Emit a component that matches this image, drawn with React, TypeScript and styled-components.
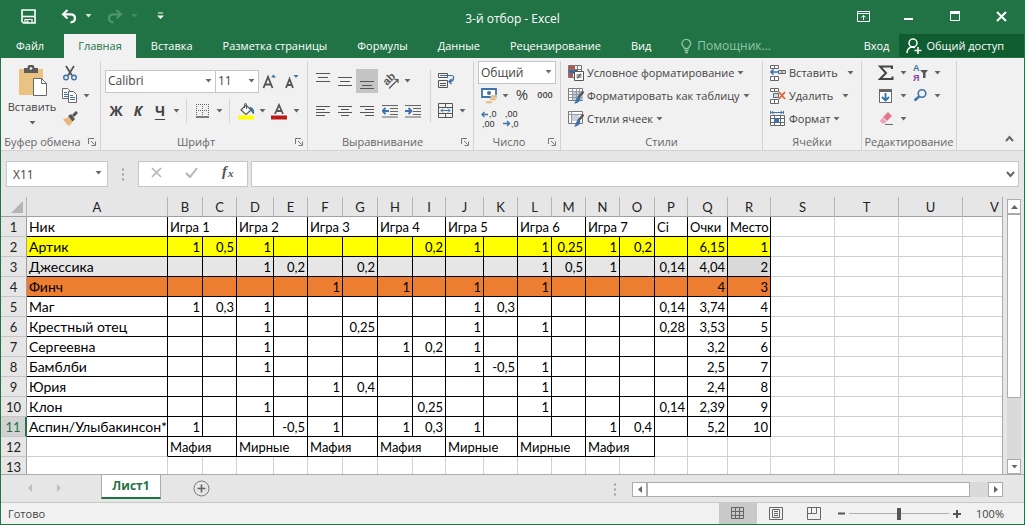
import React from 'react';
import styled, { createGlobalStyle, css } from 'styled-components';

const green = '#217346';
const uiFont = '"Open Sans", "Noto Sans", sans-serif';
const cellFont = 'Lato, "Open Sans", sans-serif';

const GlobalStyle = createGlobalStyle`
  *, *::before, *::after { box-sizing: border-box; }
  body { margin: 0; background: #e6e6e6; }
  button, input, select { font: inherit; color: inherit; margin: 0; }
  button { border: 0; padding: 0; background: none; cursor: default; }
`;

const Window = styled.div`
  display: flex;
  flex-direction: column;
  height: 100vh;
  min-height: 320px;
  overflow: hidden;
  border: 1px solid ${green};
  border-top: 0;
  background: #e6e6e6;
  color: #444;
  font: 11px/16px ${uiFont};
`;

/* ---------- title bar ---------- */

const TitleBar = styled.header`
  display: grid;
  grid-template-columns: 1fr auto 1fr;
  flex: none;
  height: 34px;
  background: ${green};
  color: #fff;
`;

const QuickAccess = styled.div`
  display: flex;
  align-items: center;
  gap: 8px;
  height: 32px;
  padding-left: 7px;
`;

const QuickPair = styled.div`
  display: flex;
`;

const BarButton = styled.button<{ $w: number; $dim?: boolean }>`
  display: flex;
  align-items: center;
  justify-content: center;
  flex: none;
  width: ${p => p.$w}px;
  height: 24px;
  color: ${p => (p.$dim ? '#4f9470' : '#fff')};
`;

const DocTitle = styled.h1`
  margin: 0;
  padding-top: 3px;
  font-size: 12px;
  font-weight: 400;
  line-height: 32px;
`;

const WindowButtons = styled.div`
  display: flex;
  align-items: center;
  justify-content: flex-end;
  height: 32px;
`;

/* ---------- tabs ---------- */

const TabBar = styled.nav`
  display: flex;
  flex: none;
  height: 24px;
  background: ${green};
  color: #fff;
`;

const Tab = styled.button<{ $active?: boolean; $file?: boolean }>`
  flex: none;
  height: 24px;
  padding: ${p => (p.$file ? '0 20px 0 15px' : p.$active ? '0 14px' : '0 15px')};
  white-space: nowrap;
  ${p => p.$active && css`background: #f1f1f1; color: ${green};`}
`;

const Assistant = styled.label`
  display: flex;
  align-items: center;
  gap: 5px;
  flex: 1;
  min-width: 0;
  padding-left: 15px;
  color: #92c3a8;
`;

const AssistantInput = styled.input`
  width: 100px;
  border: 0;
  padding: 0;
  background: none;
  outline: 0;
  font-size: 12px;
  &::placeholder { color: #92c3a8; opacity: 1; }
`;

const SignIn = styled.button`
  padding: 0 10px;
`;

const Share = styled.button`
  display: flex;
  align-items: center;
  gap: 4px;
  height: 23px;
  padding: 0 20px 0 7px;
  background: #0f5c30;
  white-space: nowrap;
`;

/* ---------- ribbon ---------- */

const Ribbon = styled.section`
  display: flex;
  flex: none;
  height: 93px;
  border-bottom: 1px solid #d2d2d2;
  background: #f1f1f1;
`;

const Group = styled.div<{ $w: number }>`
  display: flex;
  flex-direction: column;
  flex: none;
  width: ${p => p.$w}px;
  height: 89px;
  margin-top: 3px;
  border-right: 1px solid #d2d2d2;
`;

const GroupBody = styled.div<{ $pad?: number; $padEnd?: number }>`
  display: flex;
  flex: 1;
  padding: 0 ${p => p.$padEnd ?? 0}px 0 ${p => p.$pad ?? 4}px;
`;

const GroupFooter = styled.div`
  display: flex;
  align-items: center;
  height: 16px;
  color: #666;
`;

const GroupLabel = styled.span`
  flex: 1;
  text-align: center;
  white-space: nowrap;
`;

const Launcher = styled.button`
  display: flex;
  justify-content: center;
  width: 16px;
`;

const Rows = styled.div<{ $two?: boolean; $grow?: boolean }>`
  display: flex;
  flex-direction: column;
  ${p => p.$grow && 'flex: 1;'}
  ${p => p.$two && 'gap: 6px; padding-top: 8px;'}
`;

const Row = styled.div<{ $tall?: boolean }>`
  display: flex;
  align-items: center;
  height: ${p => (p.$tall ? 24 : 23)}px;
`;

const Tool = styled.button<{ $w?: number; $on?: boolean }>`
  display: flex;
  align-items: center;
  justify-content: center;
  flex: none;
  width: ${p => p.$w ?? 22}px;
  height: 24px;
  ${p => p.$on && 'background: #c5c5c5;'}
`;

const LetterTool = styled(Tool)<{ $style: 'bold' | 'italic' | 'underline' }>`
  font-size: 14px;
  font-weight: 700;
  ${p => p.$style === 'italic' && 'font-style: italic;'}
  ${p => p.$style === 'underline' && 'text-decoration: underline; text-underline-offset: 3px;'}
`;

const PercentTool = styled(Tool)`
  padding-bottom: 4px;
  font-size: 15px;
`;

const ThousandsTool = styled(Tool)`
  padding-bottom: 2px;
  font-size: 9px;
  font-weight: 600;
`;

const Divider = styled.span<{ $tall?: boolean }>`
  flex: none;
  width: 1px;
  height: ${p => (p.$tall ? 54 : 24)}px;
  margin: ${p => (p.$tall ? '8px 4px 0 0' : '0 5px')};
  background: #d5d5d5;
`;

const PasteButton = styled.button`
  display: flex;
  flex-direction: column;
  align-items: center;
  width: 54px;
  padding-top: 4px;
  gap: 2px;
`;

const PasteArrow = styled.span`
  display: flex;
  padding-top: 4px;
`;

const LabelTool = styled.button<{ $split?: boolean }>`
  display: flex;
  align-items: center;
  height: 23px;
  gap: 3px;
  white-space: nowrap;
  & > svg:last-child { margin-left: ${p => (p.$split ? 6 : 0)}px; }
`;

const ComboBox = styled.div<{ $w: number; $joined?: boolean }>`
  position: relative;
  flex: none;
  width: ${p => p.$w}px;
  height: 23px;
  ${p => p.$joined && 'margin-left: -1px;'}
  & > svg { position: absolute; right: 4px; top: 9px; pointer-events: none; }
`;

const ComboSelect = styled.select`
  appearance: none;
  width: 100%;
  height: 100%;
  border: 1px solid #c6c6c6;
  border-radius: 0;
  padding: 0 0 0 2px;
  background: #fff;
  outline: 0;
  font-size: 12px;
`;

const RibbonEnd = styled.div`
  display: flex;
  flex: 1;
  align-items: flex-end;
  justify-content: flex-end;
  padding: 0 10px 0 0;
  height: 88px;
`;

/* ---------- formula bar ---------- */

const FormulaBar = styled.section`
  display: flex;
  align-items: center;
  flex: none;
  height: 46px;
  padding: 0 5px;
`;

const NameBox = styled.div`
  position: relative;
  flex: none;
  width: 102px;
  height: 26px;
  & > svg { position: absolute; right: 6px; top: 10px; pointer-events: none; }
`;

const BoxInput = styled.input`
  width: 100%;
  height: 100%;
  border: 1px solid #c6c6c6;
  padding: 0 24px 0 6px;
  background: #fff;
  outline: 0;
  font-size: 12px;
`;

const Grip = styled.span`
  display: flex;
  justify-content: center;
  flex: none;
  width: 30px;
`;

const FormulaButtons = styled.div`
  display: flex;
  align-items: center;
  justify-content: space-around;
  flex: none;
  width: 110px;
  height: 26px;
  margin-right: 3px;
  border: 1px solid #c6c6c6;
  background: #fff;
`;

const FormulaField = styled.div`
  position: relative;
  flex: 1;
  height: 26px;
  & > svg { position: absolute; right: 4px; top: 10px; pointer-events: none; }
`;

/* ---------- sheet ---------- */

const SheetArea = styled.main`
  display: flex;
  flex: 1;
  min-height: 0;
  border-bottom: 1px solid #ababab;
`;

const SheetView = styled.div`
  flex: 1;
  min-width: 0;
  overflow: hidden;
  border-right: 1px solid #ababab;
`;

const Sheet = styled.table`
  table-layout: fixed;
  width: 0;
  border-spacing: 0;
  color: #000;
  font: 13px/18px ${cellFont};
`;

const ColumnHead = styled.th`
  height: 20px;
  padding: 1px 0 0;
  border-right: 1px solid #b5b5b5;
  border-bottom: 1px solid #9f9f9f;
  background: #e6e6e6;
  color: #222;
  font-weight: 400;
  text-align: center;
`;

const Corner = styled(ColumnHead)`
  & > svg { display: block; margin-left: 10px; }
`;

const RowHead = styled.th<{ $active?: boolean }>`
  height: 20px;
  padding: 1px 0 0;
  border-right: 1px solid #9f9f9f;
  border-bottom: 1px solid #c6c6c6;
  background: #e6e6e6;
  color: #222;
  font-weight: 400;
  text-align: center;
  ${p => p.$active && css`background: #d2d2d2; color: ${green}; border-right: 2px solid ${green};`}
`;

const Cell = styled.td<{ $fill?: string; $right: boolean; $bottom: boolean; $num?: boolean; $name?: boolean }>`
  height: 20px;
  padding: 1px 2px 0;
  border-right: 1px solid ${p => (p.$right ? '#000' : '#d0d0d0')};
  border-bottom: 1px solid ${p => (p.$bottom ? '#000' : '#d0d0d0')};
  background: ${p => p.$fill ?? '#fff'};
  font-size: ${p => (p.$name ? 14 : 13)}px;
  text-align: ${p => (p.$num ? 'right' : 'left')};
  white-space: nowrap;
`;

const VScroll = styled.div`
  display: flex;
  flex-direction: column;
  flex: none;
  width: 14px;
  margin: 2px 3px 0 4px;
  background: #dadada;
`;

const ScrollButton = styled.button<{ $wide?: boolean }>`
  display: flex;
  align-items: center;
  justify-content: center;
  flex: none;
  width: ${p => (p.$wide ? 15 : 14)}px;
  height: 15px;
  border: 1px solid #ababab;
  background: #fff;
`;

const VThumb = styled.div`
  flex: 3;
  border: 1px solid #ababab;
  background: #fff;
`;

const TrackRest = styled.div`
  flex: 1;
`;

/* ---------- sheet tabs ---------- */

const SheetBar = styled.div`
  display: flex;
  flex: none;
  height: 28px;
  border-bottom: 1px solid #c8c8c8;
`;

const SheetNav = styled.div`
  display: flex;
  align-items: center;
  flex: none;
  gap: 24px;
  width: 100px;
  padding: 0 0 2px 27px;
`;

const SheetTab = styled.button`
  flex: none;
  width: 60px;
  height: 24px;
  border: 1px solid #ababab;
  border-top: 0;
  border-bottom: 2px solid ${green};
  background: #fff;
  color: ${green};
  font-size: 12px;
  font-weight: 700;
`;

const AddSheet = styled.button`
  display: flex;
  align-items: center;
  margin-left: 32px;
  height: 26px;
`;

const HScrollArea = styled.div`
  display: flex;
  align-items: center;
  flex: none;
  width: 38%;
  height: 28px;
  margin: 0 21px 0 auto;
`;

const HGrip = styled(Grip)`
  width: 18px;
  justify-content: flex-start;
`;

const HTrack = styled.div`
  display: flex;
  flex: 1;
  background: #dadada;
`;

const HThumb = styled.div`
  flex: 1;
  height: 15px;
  margin-right: 18px;
  border: 1px solid #ababab;
  background: #fff;
`;

/* ---------- status bar ---------- */

const StatusBar = styled.footer`
  display: flex;
  align-items: center;
  flex: none;
  height: 21px;
  padding: 0 20px 0 7px;
  background: #f1f1f1;
`;

const StatusText = styled.span`
  flex: 1;
`;

const ViewButton = styled.button<{ $on?: boolean }>`
  display: flex;
  align-items: center;
  justify-content: center;
  width: 38px;
  height: 21px;
  ${p => p.$on && 'background: #c9c9c9;'}
`;

const ZoomStep = styled.button`
  display: flex;
  align-items: center;
  justify-content: center;
  width: 16px;
  height: 20px;
`;

const ZoomRange = styled.input`
  appearance: none;
  width: 100px;
  height: 12px;
  background: linear-gradient(#b0b0b0, #b0b0b0) center / 100% 1px no-repeat;
  &::-webkit-slider-thumb {
    appearance: none;
    width: 4px;
    height: 12px;
    background: #555;
  }
`;

const ZoomValue = styled.span`
  width: 39px;
  text-align: right;
`;

/* ---------- icons ---------- */

type IconProps = { w?: number; h?: number; children: React.ReactNode };
const Icon = ({ w = 16, h = 16, children }: IconProps) => (
  <svg width={w} height={h} viewBox={`0 0 ${w} ${h}`} fill="none" stroke="currentColor" aria-hidden="true">
    {children}
  </svg>
);

const Arrow = () => (
  <Icon w={7} h={4}><path d="M.5 0h6l-3 3.500z" fill="currentColor" stroke="none" opacity=".8" /></Icon>
);

const Chevron = ({ up }: { up?: boolean }) => (
  <Icon w={9} h={7}><path d={up ? 'M1 6l3.5-4L8 6' : 'M1 1l3.5 4L8 1'} stroke="#666" strokeWidth="2" /></Icon>
);

const Dots = () => (
  <Icon w={3} h={13}><path d="M0 1.5h2M0 6.5h2M0 11.5h2" stroke="#a0a0a0" strokeWidth="2" /></Icon>
);

const SaveIcon = () => (
  <Icon w={15} h={15}>
    <path d="M1 1h13v13H2.500L1 12.500z" strokeWidth="1.6" />
    <path d="M1.500 7.500h12" strokeWidth="1.6" />
    <path d="M4 14V10.500h7V14" strokeWidth="1.2" />
    <path d="M5.500 11.500h2V14h-2z" fill="currentColor" stroke="none" />
  </Icon>
);

const UndoIcon = ({ flip }: { flip?: boolean }) => (
  <Icon w={16} h={15}>
    <g transform={flip ? 'translate(16 0) scale(-1 1)' : undefined}>
      <path d="M6.5 1L2 5.3l4.5 4.2" strokeWidth="2" />
      <path d="M2 5.3h7.5c3 0 4.5 1.7 4.5 4s-1.800 4-4.500 4" strokeWidth="2.200" />
    </g>
  </Icon>
);

const CustomizeIcon = () => (
  <Icon w={7} h={8}>
    <path d="M1 1h5" />
    <path d="M0 3.500h7L3.500 7z" fill="currentColor" stroke="none" />
  </Icon>
);

const RibbonOptionsIcon = () => (
  <Icon w={13} h={11}>
    <path d="M.5.5h12v10H.5zM.5 2.500h12M6.500 9V4.500M4.300 6.500l2.200-2.200 2.200 2.200" />
  </Icon>
);

const MinimizeIcon = () => <Icon w={10} h={11}><path d="M0 8h9" strokeWidth="2" /></Icon>;
const MaximizeIcon = () => (
  <Icon w={11} h={11}><path d="M.5.5h9v9h-9z" /><path d="M0 1.500h10" strokeWidth="3" /></Icon>
);
const CloseIcon = () => <Icon w={11} h={11}><path d="M1 1l9 9M10 1l-9 9" strokeWidth="2" /></Icon>;

const BulbIcon = () => (
  <Icon w={11} h={15}>
    <path d="M3.500 9.500C3.500 8 1 7 1 4.800a4.300 4.300 0 0 1 8.700 0C9.700 7 7.200 8 7.200 9.500z" strokeWidth="1.300" />
    <path d="M3.500 11.500h4M4 13.500h3" strokeWidth="1.300" />
  </Icon>
);

const ShareIcon = () => (
  <Icon w={16} h={16}>
    <circle cx="7" cy="5" r="4" strokeWidth="1.500" />
    <path d="M1 15c0-3.500 2-5.500 5-6l3 .5M8.500 12.500h7M12 9v7" strokeWidth="1.500" />
  </Icon>
);

const PasteIcon = () => (
  <Icon w={30} h={32}>
    <path d="M2 4h24v26H2z" fill="#eac282" stroke="none" />
    <path d="M7 3h3.500a3.500 3.500 0 0 1 7 0H21v5H7z" fill="#5c5c5c" stroke="none" />
    <circle cx="14" cy="3.500" r="1.300" fill="#f1f1f1" stroke="none" />
    <path d="M16.500 13.500h8l5 5v12h-13z" fill="#fff" stroke="#666" />
    <path d="M24.500 13.500v5h5" stroke="#666" />
  </Icon>
);

const CutIcon = () => (
  <Icon w={16} h={16}>
    <path d="M4 1l6 9.500M12 1L6 10.500" stroke="#555" strokeWidth="1.800" />
    <circle cx="4" cy="12.500" r="2.300" stroke="#3f72a8" strokeWidth="1.400" />
    <circle cx="12" cy="12.500" r="2.300" stroke="#3f72a8" strokeWidth="1.400" />
  </Icon>
);

const CopyIcon = () => (
  <Icon w={16} h={15}>
    <path d="M.5.500h5l3 3v7h-8z" fill="#fff" stroke="#666" />
    <path d="M2 4.500h3M2 6.500h4M2 8.500h4" stroke="#3f72a8" />
    <path d="M6.500 3.500h5l3 3v8h-8z" fill="#fff" stroke="#666" />
    <path d="M8 7.500h3M8 9.500h5M8 11.500h5" stroke="#3f72a8" />
  </Icon>
);

const BrushIcon = () => (
  <Icon w={16} h={15}>
    <path d="M1 8.500l5-2.500 5 4-3 4.500H6z" fill="#eab97a" stroke="none" />
    <path d="M6 5l3-2 4 5-2.500 2.500z" fill="#555" stroke="none" />
    <path d="M11 5l4-4" stroke="#555" strokeWidth="3" />
  </Icon>
);

const GrowFont = ({ down }: { down?: boolean }) => (
  <Icon w={16} h={16}>
    <path d={down ? 'M2 15l3.500-9L9 15M3.300 12h4.500' : 'M1.500 15L6 4l4.500 11M3 11.500h6'} stroke="#555" strokeWidth="1.800" />
    <path d={down ? 'M9.500 2h5L12 5z' : 'M9 4.500h5L11.500 1.500z'} fill="#3f72a8" stroke="none" />
  </Icon>
);

const BorderIcon = () => (
  <Icon w={14} h={14}>
    <path d="M.5 0v12M6.500 0v12M12.500 0v12M0 .5h13M0 6.500h13" stroke="#666" strokeDasharray="1 1" />
    <path d="M0 13h13" stroke="#555" strokeWidth="1.500" />
  </Icon>
);

const FillIcon = () => (
  <Icon w={17} h={17}>
    <path d="M3 7l5-5 5 5-5 4.500z" fill="#fff" stroke="#555" strokeWidth="1.200" />
    <path d="M6.500 5V1.500c0-1.300 2-1.300 2 0V6" stroke="#555" />
    <path d="M12 4c3 1 4 3 3.500 7l-2-3z" fill="#3f72a8" stroke="#3f72a8" />
    <path d="M0 12.500h16v4H0z" fill="#ffff00" stroke="none" />
  </Icon>
);

const FontColorIcon = () => (
  <Icon w={16} h={17}>
    <path d="M4 11L8 2l4 9M5.500 8h5" stroke="#555" strokeWidth="1.800" />
    <path d="M0 12.500h16v4H0z" fill="#c01818" stroke="none" />
  </Icon>
);

const Lines = ({ d }: { d: string }) => <Icon w={14} h={17}><path d={d} stroke="#555" /></Icon>;
const linePaths = {
  top: 'M0 .5h14M2 4.500h10M0 8.500h14',
  middle: 'M0 4.500h14M2 8.500h10M0 12.500h14',
  bottom: 'M0 8.500h14M2 12.500h10M0 15.500h14',
  left: 'M0 3.500h14M0 6.500h9M0 9.500h14M0 12.500h9',
  center: 'M0 3.500h14M3 6.500h8M0 9.500h14M3 12.500h8',
  right: 'M0 3.500h14M5 6.500h9M0 9.500h14M5 12.500h9',
};

const OrientIcon = () => (
  <svg width="18" height="18" viewBox="0 0 18 18" overflow="visible" aria-hidden="true">
    <text x="0" y="0" transform="translate(6 14) rotate(-45)" fontSize="11" fontFamily="Liberation Sans, sans-serif" fontWeight="700" fill="#555">ab</text>
    <path d="M8 16.500L17 7.500M13.500 7.500H17V11" fill="none" stroke="#555" strokeWidth="1.200" />
  </svg>
);

const IndentIcon = ({ increase }: { increase?: boolean }) => (
  <Icon w={16} h={14}>
    <path d="M0 1.500h16M8 4.500h8M8 7.500h8M8 10.500h8M0 13h16" stroke="#666" />
    <path d={increase ? 'M0 7h6M3.500 4l3 3-3 3' : 'M7 7H1M3.500 4l-3 3 3 3'} stroke="#3f72a8" strokeWidth="1.800" />
  </Icon>
);

const WrapIcon = () => (
  <Icon w={17} h={16}>
    <path d="M.5.500h9v4h-9zM.5 7.500h9v7h-9zM2 10.500h6M2 12.500h6" stroke="#555" />
    <path d="M2 2.500h13" stroke="#3f72a8" />
    <path d="M15.500 3c.5 4-1 5.500-4 5.500M13.500 6l-2.500 2.500 2.500 2.500" stroke="#3f72a8" strokeWidth="1.400" />
  </Icon>
);

const MergeIcon = () => (
  <Icon w={16} h={16}>
    <path d="M.5.500h14v14H.5zM.5 4.500h14M.5 10.500h14M7.500.500v4M7.500 10.500v4" stroke="#555" />
    <path d="M3 7.500h9M5 5.500l-2 2 2 2M10 5.500l2 2-2 2" stroke="#3f72a8" />
  </Icon>
);

const MoneyIcon = () => (
  <Icon w={17} h={16}>
    <path d="M1 1h14v8H1z" fill="#fff" stroke="#3f72a8" strokeWidth="1.800" />
    <circle cx="8" cy="5" r="2" fill="#3f72a8" stroke="none" />
    <path d="M11 7c-1.800 0-1.800 2.500 0 2.500h4c1.800 0 1.800-2.500 0-2.500zM10 10c-1.800 0-1.800 2.500 0 2.500h4c1.800 0 1.800-2.500 0-2.500zM6 13c-1.800 0-1.800 2.500 0 2.500h4c1.800 0 1.800-2.500 0-2.500z" fill="#e8b878" stroke="#f1f1f1" strokeWidth=".5" />
  </Icon>
);

const DecimalIcon = ({ less }: { less?: boolean }) => (
  <svg width="17" height="20" viewBox="0 0 17 20" overflow="visible" fontFamily="Liberation Sans, sans-serif" fontSize="9" fill="#333" aria-hidden="true">
    <text x={less ? 2 : 8} y="8">{less ? ',00' : ',0'}</text>
    <text x={less ? 8 : 1} y="18">{less ? ',0' : ',00'}</text>
    <path d={less ? 'M0 14.500h6M4 12l2.500 2.500L4 17' : 'M7 5.500H1M3.500 3L1 5.500 3.500 8'} fill="none" stroke="#3f72a8" strokeWidth="1.300" />
  </svg>
);

const ConditionalIcon = () => (
  <Icon w={16} h={16}>
    <path d="M.5.500h13v12H.5zM.5 4.500h13M.5 8.500h13M9.500.500v12" fill="#fff" stroke="#777" />
    <path d="M1 1h6v3H1zM1 9h4v3H1z" fill="#c0504d" stroke="none" />
    <path d="M1 5h8v3H1z" fill="#3f6a9a" stroke="none" />
    <path d="M6.500 6.500h9v9h-9z" fill="#fff" stroke="#555" />
    <path d="M8.500 10h5M8.500 12h5M12.500 8.500l-3 5" stroke="#444" />
  </Icon>
);

const TableStyleIcon = ({ cells }: { cells?: boolean }) => (
  <Icon w={16} h={16}>
    <path d="M.5.500h14v12H.5z" fill="#fff" stroke="#777" />
    {cells
      ? <path d="M3 4h8v6H3z" fill="#c8d4e2" stroke="none" />
      : <path d="M5 4h10v8H5z" fill="#b4cbe4" stroke="none" />}
    <path d={cells ? 'M.5 3.500h14M3.500.500v12' : 'M.5 3.500h14M.5 6.500h14M.5 9.500h14M4.500.500v12M8.500.500v12M11.500.500v12'} stroke="#999" />
    <path d="M15.500 3.500L10 10" stroke="#555" strokeWidth="2.500" />
    <path d="M10.500 8.500l2 2c-.5 3-3 5-6.500 5 2-1.500 1.500-5 4.500-7z" fill="#3f72a8" stroke="none" />
  </Icon>
);

const CellsIcon = ({ remove }: { remove?: boolean }) => (
  <Icon w={16} h={16}>
    <path d="M.5.500h4v3h-4zM4.500.500h4v3h-4zM.5 11.500h4v4h-4zM4.500 11.500h4v4h-4z" fill="#fff" stroke="#666" />
    {remove ? (
      <>
        <path d="M3.500 5.500h5v4h-5z" fill="#cfdced" stroke="#666" />
        <path d="M9 4l6 7M15 4l-6 7" stroke="#d9663a" strokeWidth="1.800" />
      </>
    ) : (
      <>
        <path d="M8.500 5.500h7v3h-7zM12 5.500v3" fill="#cfdced" stroke="#666" />
        <path d="M8 7H1M3.500 4.500L1 7l2.500 2.500" stroke="#3f72a8" strokeWidth="1.600" />
      </>
    )}
  </Icon>
);

const FormatIcon = () => (
  <Icon w={16} h={16}>
    <path d="M1.500 1.500h11M.5 0v3M13.500 0v3M3.500 0L1.500 1.500l2 1.500M10.500 0l2 1.500-2 1.500" stroke="#3f72a8" />
    <path d="M.5 4.500h14v10H.5z" fill="#fff" stroke="#666" />
    <path d="M.5 7.500h14M.5 11.500h14M4.500 4.500v10M10.500 4.500v10" stroke="#666" />
    <path d="M4 7h5v5H4z" fill="#3f72a8" stroke="none" />
  </Icon>
);

const SumIcon = () => (
  <Icon w={16} h={16}>
    <path d="M14 4V1.500H2L8 8l-6 6h12.500V11.500" stroke="#444" strokeWidth="2" />
  </Icon>
);

const SortIcon = () => (
  <svg width="17" height="20" viewBox="0 0 17 20" overflow="visible" fontFamily="Liberation Sans, sans-serif" fontSize="9" fontWeight="700" aria-hidden="true">
    <text x="1" y="8" fill="#3f72a8">А</text>
    <text x="1" y="18" fill="#8a3fa0">Я</text>
    <path d="M8 7h8l-2.500 3v5h-2.500v-5z" fill="#555" />
  </svg>
);

const FillDownIcon = () => (
  <Icon w={16} h={16}>
    <path d="M1.500 1.500h12v13h-12z" fill="#fff" stroke="#666" />
    <path d="M1 1h13v3H1z" fill="#666" stroke="none" />
    <path d="M7.500 5v7M4 9l3.500 3.500L11 9" stroke="#2f72a8" strokeWidth="1.800" />
  </Icon>
);

const FindIcon = () => (
  <Icon w={15} h={15}>
    <circle cx="9" cy="5.500" r="3.800" stroke="#3f72a8" strokeWidth="1.600" />
    <path d="M6.200 8.500L1.500 12.500" stroke="#3f72a8" strokeWidth="2.400" />
  </Icon>
);

const EraserIcon = () => (
  <Icon w={15} h={15}>
    <path d="M9 1l4 4-5 5-4-4z" fill="#e0788c" stroke="none" />
    <path d="M3.500 6.500l4 4L5.500 12.500H3L1 10z" fill="#eda3b0" stroke="none" />
    <path d="M6 13.500h8" stroke="#666" />
  </Icon>
);

const LauncherIcon = () => (
  <Icon w={8} h={8}>
    <path d="M.5 6V.500H6M3 3l3.500 3.500M7.500 3.500v4h-4" stroke="#777" />
  </Icon>
);

/* ---------- data ---------- */

const columns: [string, number][] = [
  ['A', 141], ['B', 35], ['C', 34], ['D', 37], ['E', 34], ['F', 35], ['G', 35], ['H', 35],
  ['I', 33], ['J', 38], ['K', 34], ['L', 34], ['M', 34], ['N', 34], ['O', 35], ['P', 33],
  ['Q', 40], ['R', 43], ['S', 64], ['T', 64], ['U', 64], ['V', 64],
];
const letters = columns.map(c => c[0]);

const games = ['B', 'D', 'F', 'H', 'J', 'L', 'N'];
const gameEnds = ['C', 'E', 'G', 'I', 'K', 'M', 'O'];

type RowData = { fill?: string; v: Record<string, string> };
const rows: RowData[] = [
  { v: { A: 'Ник', B: 'Игра 1', D: 'Игра 2', F: 'Игра 3', H: 'Игра 4', J: 'Игра 5', L: 'Игра 6', N: 'Игра 7', P: 'Ci', Q: 'Очки', R: 'Место' } },
  { fill: '#ffff00', v: { A: 'Артик', B: '1', C: '0,5', D: '1', I: '0,2', J: '1', L: '1', M: '0,25', N: '1', O: '0,2', Q: '6,15', R: '1' } },
  { fill: '#e7e6e6', v: { A: 'Джессика', D: '1', E: '0,2', G: '0,2', L: '1', M: '0,5', N: '1', P: '0,14', Q: '4,04', R: '2' } },
  { fill: '#ed7d31', v: { A: 'Финч', F: '1', H: '1', J: '1', L: '1', Q: '4', R: '3' } },
  { v: { A: 'Маг', B: '1', C: '0,3', D: '1', J: '1', K: '0,3', P: '0,14', Q: '3,74', R: '4' } },
  { v: { A: 'Крестный отец', D: '1', G: '0,25', J: '1', L: '1', P: '0,28', Q: '3,53', R: '5' } },
  { v: { A: 'Сергеевна', D: '1', H: '1', I: '0,2', J: '1', Q: '3,2', R: '6' } },
  { v: { A: 'Бамблби', D: '1', J: '1', K: '-0,5', L: '1', Q: '2,5', R: '7' } },
  { v: { A: 'Юрия', F: '1', G: '0,4', L: '1', Q: '2,4', R: '8' } },
  { v: { A: 'Клон', D: '1', I: '0,25', L: '1', P: '0,14', Q: '2,39', R: '9' } },
  { v: { A: 'Аспин/Улыбакинсон*', B: '1', E: '-0,5', F: '1', H: '1', I: '0,3', J: '1', N: '1', O: '0,4', Q: '5,2', R: '10' } },
  { v: { B: 'Мафия', D: 'Мирные', F: 'Мафия', H: 'Мафия', J: 'Мирные', L: 'Мирные', N: 'Мафия' } },
  { v: {} },
];

const SheetRow = ({ row, n }: { row: RowData; n: number }) => {
  const merged = n === 1 || n === 12;
  return (
    <tr>
      <RowHead scope="row" $active={n === 11}>{n}</RowHead>
      {letters.map((c, i) => {
        if (merged && gameEnds.includes(c)) return null;
        const pair = merged && games.includes(c);
        const inTable = n <= 11 ? i <= 17 : n === 12 && i <= 14;
        const fill = i <= 17 ? (n === 3 && c === 'R' ? '#d9d9d9' : row.fill) : undefined;
        return (
          <Cell
            key={c}
            colSpan={pair ? 2 : 1}
            $fill={fill}
            $right={inTable}
            $bottom={inTable && !(n === 12 && c === 'A')}
            $num={c !== 'A' && !merged}
            $name={c === 'A'}
          >
            {row.v[c]}
          </Cell>
        );
      })}
    </tr>
  );
};

const tabs = ['Вставка', 'Разметка страницы', 'Формулы', 'Данные', 'Рецензирование', 'Вид'];

const Footer = ({ label, launcher }: { label: string; launcher?: boolean }) => (
  <GroupFooter>
    <GroupLabel>{label}</GroupLabel>
    {launcher && <Launcher aria-label={`Параметры: ${label}`}><LauncherIcon /></Launcher>}
  </GroupFooter>
);

const Drop = ({ label }: { label: string }) => <Tool $w={10} aria-label={label}><Arrow /></Tool>;

export default function App() {
  return (
    <Window>
      <GlobalStyle />
      <TitleBar>
        <QuickAccess>
          <BarButton $w={40} aria-label="Сохранить"><SaveIcon /></BarButton>
          <QuickPair>
            <BarButton $w={26} aria-label="Отменить"><UndoIcon /></BarButton>
            <BarButton $w={12} aria-label="Список отмены"><Arrow /></BarButton>
          </QuickPair>
          <QuickPair>
            <BarButton $w={26} $dim aria-label="Повторить"><UndoIcon flip /></BarButton>
            <BarButton $w={12} $dim aria-label="Список повтора"><Arrow /></BarButton>
          </QuickPair>
          <BarButton $w={24} aria-label="Настройка панели"><CustomizeIcon /></BarButton>
        </QuickAccess>
        <DocTitle>3-й отбор - Excel</DocTitle>
        <WindowButtons>
          <BarButton $w={46} aria-label="Параметры ленты"><RibbonOptionsIcon /></BarButton>
          <BarButton $w={46} aria-label="Свернуть"><MinimizeIcon /></BarButton>
          <BarButton $w={46} aria-label="Развернуть"><MaximizeIcon /></BarButton>
          <BarButton $w={46} aria-label="Закрыть"><CloseIcon /></BarButton>
        </WindowButtons>
      </TitleBar>

      <TabBar>
        <Tab $file>Файл</Tab>
        <Tab $active>Главная</Tab>
        {tabs.map(t => <Tab key={t}>{t}</Tab>)}
        <Assistant>
          <BulbIcon />
          <AssistantInput placeholder="Помощник..." aria-label="Помощник" />
        </Assistant>
        <SignIn>Вход</SignIn>
        <Share><ShareIcon />Общий доступ</Share>
      </TabBar>

      <Ribbon>
        <Group $w={100}>
          <GroupBody>
            <PasteButton><PasteIcon />Вставить<PasteArrow><Arrow /></PasteArrow></PasteButton>
            <Rows>
              <Row><Tool aria-label="Вырезать"><CutIcon /></Tool></Row>
              <Row><Tool aria-label="Копировать"><CopyIcon /></Tool><Drop label="Варианты копирования" /></Row>
              <Row><Tool aria-label="Формат по образцу"><BrushIcon /></Tool></Row>
            </Rows>
          </GroupBody>
          <Footer label="Буфер обмена" launcher />
        </Group>

        <Group $w={207}>
          <GroupBody>
            <Rows $two>
              <Row $tall>
                <ComboBox $w={111}><ComboSelect aria-label="Шрифт"><option>Calibri</option></ComboSelect><Arrow /></ComboBox>
                <ComboBox $w={44} $joined><ComboSelect aria-label="Размер шрифта"><option>11</option></ComboSelect><Arrow /></ComboBox>
                <Tool aria-label="Увеличить размер"><GrowFont /></Tool>
                <Tool aria-label="Уменьшить размер"><GrowFont down /></Tool>
              </Row>
              <Row $tall>
                <LetterTool $style="bold">Ж</LetterTool>
                <LetterTool $style="italic">К</LetterTool>
                <LetterTool $style="underline">Ч</LetterTool>
                <Drop label="Вид подчёркивания" />
                <Divider />
                <Tool aria-label="Границы"><BorderIcon /></Tool>
                <Drop label="Виды границ" />
                <Divider />
                <Tool aria-label="Цвет заливки"><FillIcon /></Tool>
                <Drop label="Выбор заливки" />
                <Tool $w={24} aria-label="Цвет текста"><FontColorIcon /></Tool>
                <Drop label="Выбор цвета" />
              </Row>
            </Rows>
          </GroupBody>
          <Footer label="Шрифт" launcher />
        </Group>

        <Group $w={166}>
          <GroupBody $padEnd={6}>
            <Rows $two $grow>
              <Row $tall>
                <Tool aria-label="По верхнему краю"><Lines d={linePaths.top} /></Tool>
                <Tool aria-label="По середине"><Lines d={linePaths.middle} /></Tool>
                <Tool $on aria-label="По нижнему краю"><Lines d={linePaths.bottom} /></Tool>
                <Tool $w={24} aria-label="Ориентация"><OrientIcon /></Tool>
                <Drop label="Варианты ориентации" />
              </Row>
              <Row $tall>
                <Tool aria-label="По левому краю"><Lines d={linePaths.left} /></Tool>
                <Tool aria-label="По центру"><Lines d={linePaths.center} /></Tool>
                <Tool aria-label="По правому краю"><Lines d={linePaths.right} /></Tool>
                <Tool $w={24} aria-label="Уменьшить отступ"><IndentIcon /></Tool>
                <Tool aria-label="Увеличить отступ"><IndentIcon increase /></Tool>
              </Row>
            </Rows>
            <Divider $tall />
            <Rows $two>
              <Row $tall><Tool aria-label="Перенести текст"><WrapIcon /></Tool></Row>
              <Row $tall>
                <Tool aria-label="Объединить ячейки"><MergeIcon /></Tool>
                <Drop label="Варианты объединения" />
              </Row>
            </Rows>
          </GroupBody>
          <Footer label="Выравнивание" launcher />
        </Group>

        <Group $w={87}>
          <GroupBody>
            <Rows>
              <Row>
                <ComboBox $w={78}><ComboSelect aria-label="Числовой формат"><option>Общий</option></ComboSelect><Arrow /></ComboBox>
              </Row>
              <Row>
                <Tool aria-label="Финансовый формат"><MoneyIcon /></Tool>
                <Drop label="Выбор валюты" />
                <PercentTool $w={24}>%</PercentTool>
                <ThousandsTool>000</ThousandsTool>
              </Row>
              <Row>
                <Tool aria-label="Увеличить разрядность"><DecimalIcon /></Tool>
                <Tool aria-label="Уменьшить разрядность"><DecimalIcon less /></Tool>
              </Row>
            </Rows>
          </GroupBody>
          <Footer label="Число" launcher />
        </Group>

        <Group $w={202}>
          <GroupBody $pad={7}>
            <Rows>
              <LabelTool><ConditionalIcon />Условное форматирование<Arrow /></LabelTool>
              <LabelTool><TableStyleIcon />Форматировать как таблицу<Arrow /></LabelTool>
              <LabelTool><TableStyleIcon cells />Стили ячеек<Arrow /></LabelTool>
            </Rows>
          </GroupBody>
          <Footer label="Стили" />
        </Group>

        <Group $w={99}>
          <GroupBody $pad={7}>
            <Rows>
              <LabelTool $split><CellsIcon />Вставить<Arrow /></LabelTool>
              <LabelTool $split><CellsIcon remove />Удалить<Arrow /></LabelTool>
              <LabelTool><FormatIcon />Формат<Arrow /></LabelTool>
            </Rows>
          </GroupBody>
          <Footer label="Ячейки" />
        </Group>

        <Group $w={95}>
          <GroupBody $pad={12}>
            <Rows>
              <Row>
                <Tool $w={24} aria-label="Автосумма"><SumIcon /></Tool>
                <Drop label="Функции" />
                <Tool $w={24} aria-label="Сортировка и фильтр"><SortIcon /></Tool>
                <Drop label="Варианты сортировки" />
              </Row>
              <Row>
                <Tool $w={24} aria-label="Заполнить"><FillDownIcon /></Tool>
                <Drop label="Варианты заполнения" />
                <Tool $w={24} aria-label="Найти"><FindIcon /></Tool>
                <Drop label="Варианты поиска" />
              </Row>
              <Row>
                <Tool $w={24} aria-label="Очистить"><EraserIcon /></Tool>
                <Drop label="Варианты очистки" />
              </Row>
            </Rows>
          </GroupBody>
          <Footer label="Редактирование" />
        </Group>

        <RibbonEnd><button aria-label="Свернуть ленту"><Chevron up /></button></RibbonEnd>
      </Ribbon>

      <FormulaBar>
        <NameBox><BoxInput defaultValue="X11" aria-label="Имя ячейки" /><Arrow /></NameBox>
        <Grip><Dots /></Grip>
        <FormulaButtons>
          <button aria-label="Отмена"><Icon w={11} h={11}><path d="M1 1l9 9M10 1l-9 9" stroke="#b5b5b5" strokeWidth="1.600" /></Icon></button>
          <button aria-label="Ввод"><Icon w={13} h={11}><path d="M1 6l4 4 7-9" stroke="#b5b5b5" strokeWidth="2" /></Icon></button>
          <button aria-label="Вставить функцию">
            <svg width="14" height="16" viewBox="0 0 14 16" overflow="visible" fontFamily="Liberation Serif, serif" fontStyle="italic" fontWeight="700" fill="#555" aria-hidden="true">
              <text x="1" y="12" fontSize="15">f</text>
              <text x="7" y="13" fontSize="11">x</text>
            </svg>
          </button>
        </FormulaButtons>
        <FormulaField><BoxInput aria-label="Строка формул" /><Chevron /></FormulaField>
      </FormulaBar>

      <SheetArea>
        <SheetView>
          <Sheet>
            <colgroup>
              <col width={26} />
              {columns.map(([c, w]) => <col key={c} width={w} />)}
            </colgroup>
            <thead>
              <tr>
                <Corner aria-label="Выделить всё">
                  <Icon w={12} h={12}><path d="M12 0v12H0z" fill="#b5b5b5" stroke="none" /></Icon>
                </Corner>
                {letters.map(c => <ColumnHead key={c} scope="col">{c}</ColumnHead>)}
              </tr>
            </thead>
            <tbody>{rows.map((r, i) => <SheetRow key={i} row={r} n={i + 1} />)}</tbody>
          </Sheet>
        </SheetView>
        <VScroll>
          <ScrollButton aria-label="Вверх"><Icon w={7} h={4}><path d="M0 4h7L3.500 0z" fill="#666" stroke="none" /></Icon></ScrollButton>
          <VThumb />
          <TrackRest />
          <ScrollButton aria-label="Вниз"><Arrow /></ScrollButton>
        </VScroll>
      </SheetArea>

      <SheetBar>
        <SheetNav>
          <button aria-label="Предыдущий лист"><Icon w={5} h={8}><path d="M4 0v8L0 4z" fill="#bdbdbd" stroke="none" /></Icon></button>
          <button aria-label="Следующий лист"><Icon w={5} h={8}><path d="M0 0v8l4-4z" fill="#bdbdbd" stroke="none" /></Icon></button>
        </SheetNav>
        <SheetTab>Лист1</SheetTab>
        <AddSheet aria-label="Новый лист">
          <Icon w={17} h={17}>
            <circle cx="8.500" cy="8.500" r="7.500" stroke="#777" />
            <path d="M4.500 8.500h8M8.500 4.500v8" stroke="#666" strokeWidth="1.600" />
          </Icon>
        </AddSheet>
        <HScrollArea>
          <HGrip><Dots /></HGrip>
          <ScrollButton $wide aria-label="Влево"><Icon w={4} h={7}><path d="M4 0v7L0 3.500z" fill="#666" stroke="none" /></Icon></ScrollButton>
          <HTrack><HThumb /></HTrack>
          <ScrollButton $wide aria-label="Вправо"><Icon w={4} h={7}><path d="M0 0v7l4-3.500z" fill="#666" stroke="none" /></Icon></ScrollButton>
        </HScrollArea>
      </SheetBar>

      <StatusBar>
        <StatusText>Готово</StatusText>
        <ViewButton $on aria-label="Обычный">
          <Icon w={14} h={13}><path d="M.5.500h12v11H.5zM.5 4.500h12M.5 8.500h12M4.500.500v11M8.500.500v11" stroke="#666" /></Icon>
        </ViewButton>
        <ViewButton aria-label="Разметка страницы">
          <Icon w={14} h={13}><path d="M.5.500h13v12H.5zM3.500 2.500h7v8h-7zM5 4.500h4M5 6.500h4M5 8.500h4" stroke="#666" /></Icon>
        </ViewButton>
        <ViewButton aria-label="Страничный">
          <Icon w={14} h={13}><path d="M.5.500h13v12H.5zM4.500.500v6h5v-6M.5 6.500h4" stroke="#666" /></Icon>
        </ViewButton>
        <ZoomStep aria-label="Уменьшить масштаб"><Icon w={7} h={7}><path d="M0 3.500h7" stroke="#555" strokeWidth="2" /></Icon></ZoomStep>
        <ZoomRange type="range" min={0} max={200} defaultValue={100} aria-label="Масштаб" />
        <ZoomStep aria-label="Увеличить масштаб"><Icon w={8} h={8}><path d="M0 4h8M4 0v8" stroke="#555" strokeWidth="2" /></Icon></ZoomStep>
        <ZoomValue>100%</ZoomValue>
      </StatusBar>
    </Window>
  );
}
